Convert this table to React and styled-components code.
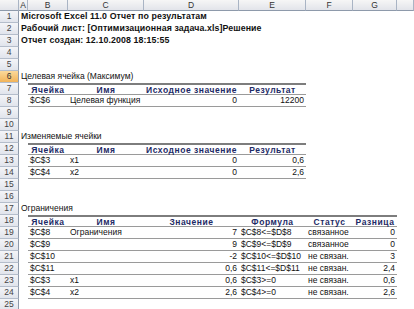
import React from 'react';
import styled, { createGlobalStyle } from 'styled-components';

const GlobalStyle = createGlobalStyle`
  body {
    margin: 0;
    background: #fff;
  }
`;

const COLS = [9, 40, 76, 95, 67, 47, 44, 17];
const LETTERS = ['A', 'B', 'C', 'D', 'E', 'F', 'G', ''];
const TEMPLATE = `19px ${COLS.map((w) => `${w}px`).join(' ')}`;

const T12 = ['l', 'l', 'r', 'r'];
const T3 = ['l', 'l', 'r', 'l', 'l', 'r'];

const rows = [
  { kind: 'title', cells: ['Microsoft Excel 11.0 Отчет по результатам'] },
  { kind: 'title', cells: ['Рабочий лист: [Оптимизационная задача.xls]Решение'] },
  { kind: 'title', cells: ['Отчет создан: 12.10.2008 18:15:55'] },
  { kind: 'empty' },
  { kind: 'empty' },
  { kind: 'label', cells: ['Целевая ячейка (Максимум)'], active: true },
  { kind: 'head', cells: ['Ячейка', 'Имя', 'Исходное значение', 'Результат'] },
  { kind: 'data', align: T12, cells: ['$C$6', 'Целевая функция', '0', '12200'] },
  { kind: 'empty' },
  { kind: 'empty' },
  { kind: 'label', cells: ['Изменяемые ячейки'] },
  { kind: 'head', cells: ['Ячейка', 'Имя', 'Исходное значение', 'Результат'] },
  { kind: 'data', align: T12, cells: ['$C$3', 'x1', '0', '0,6'] },
  { kind: 'data', align: T12, cells: ['$C$4', 'x2', '0', '2,6'] },
  { kind: 'empty' },
  { kind: 'empty' },
  { kind: 'label', cells: ['Ограничения'] },
  { kind: 'head', cells: ['Ячейка', 'Имя', 'Значение', 'Формула', 'Статус', 'Разница'] },
  { kind: 'data', align: T3, cells: ['$C$8', 'Ограничения', '7', '$C$8<=$D$8', 'связанное', '0'] },
  { kind: 'data', align: T3, cells: ['$C$9', '', '9', '$C$9<=$D$9', 'связанное', '0'] },
  { kind: 'data', align: T3, cells: ['$C$10', '', '-2', '$C$10<=$D$10', 'не связан.', '3'] },
  { kind: 'data', align: T3, cells: ['$C$11', '', '0,6', '$C$11<=$D$11', 'не связан.', '2,4'] },
  { kind: 'data', align: T3, cells: ['$C$3', 'x1', '0,6', '$C$3>=0', 'не связан.', '0,6'] },
  { kind: 'data', align: T3, cells: ['$C$4', 'x2', '2,6', '$C$4>=0', 'не связан.', '2,6'] },
  { kind: 'empty' },
];

const Sheet = styled.div`
  width: 414px;
  height: 309px;
  overflow: hidden;
  background: #fff;
  font-family: 'Liberation Sans', Arial, sans-serif;
  font-size: 8.5px;
  color: #111;
`;

const Row = styled.div`
  display: grid;
  grid-template-columns: ${TEMPLATE};
  height: ${(p) => p.$h}px;
`;

const ColHead = styled.div`
  box-sizing: border-box;
  height: 11px;
  line-height: 10px;
  text-align: center;
  color: #333;
  background: linear-gradient(#f6f6f6, #e2e4ea);
  border-right: 1px solid #a9b4c4;
  border-bottom: 1px solid #8e9aab;
`;

const RowHead = styled.div`
  box-sizing: border-box;
  height: 12px;
  line-height: 11px;
  text-align: center;
  color: ${(p) => (p.$active ? '#333' : '#444')};
  background: ${(p) =>
    p.$active ? 'linear-gradient(#fbd99a, #f2b45a)' : 'linear-gradient(#f4f5f8, #e1e4ec)'};
  border-right: 1px solid #8e9aab;
  border-bottom: 1px solid #b4bdcb;
`;

const Cell = styled.div`
  box-sizing: border-box;
  height: 12px;
  padding: 0 2px;
  line-height: ${(p) => (p.$top ? 10 : 11)}px;
  white-space: nowrap;
  overflow: visible;
  text-align: ${(p) => ({ l: 'left', r: 'right', c: 'center' }[p.$align] || 'left')};
  font-weight: ${(p) => (p.$bold || p.$title ? 700 : 400)};
  font-size: ${(p) => (p.$title ? 8.8 : 8.5)}px;
  letter-spacing: ${(p) => (p.$head ? 0.55 : p.$title ? 0.1 : 0)}px;
  color: ${(p) => (p.$head ? '#1d2a66' : '#111')};
  border-top: ${(p) => (p.$top ? '2px solid #7d7d7d' : 'none')};
  border-bottom: ${(p) => (p.$bottom ? '1px solid #9a9a9a' : 'none')};
`;

function SheetRow({ row, n }) {
  const cells = row.cells || [];
  const inTable = row.kind === 'head' || row.kind === 'data';
  const span = cells.length;

  return (
    <Row $h={12}>
      <RowHead $active={row.active}>{n}</RowHead>
      {COLS.map((_, i) => {
        if (!inTable) {
          return (
            <Cell key={i} $title={row.kind === 'title'}>
              {i === 0 ? cells[0] : ''}
            </Cell>
          );
        }
        const ci = i - 1;
        const inside = ci >= 0 && ci < span;
        const isHead = row.kind === 'head';
        return (
          <Cell
            key={i}
            $bold={isHead && inside}
            $head={isHead && inside}
            $align={isHead ? 'c' : inside ? row.align[ci] : 'l'}
            $top={isHead && inside}
            $bottom={inside}
          >
            {inside ? cells[ci] : ''}
          </Cell>
        );
      })}
    </Row>
  );
}

export default function App() {
  return (
    <Sheet>
      <GlobalStyle />
      <Row $h={11}>
        <ColHead />
        {LETTERS.map((l, i) => (
          <ColHead key={i}>{l}</ColHead>
        ))}
      </Row>
      {rows.map((row, i) => (
        <SheetRow key={i} row={row} n={i + 1} />
      ))}
    </Sheet>
  );
}
